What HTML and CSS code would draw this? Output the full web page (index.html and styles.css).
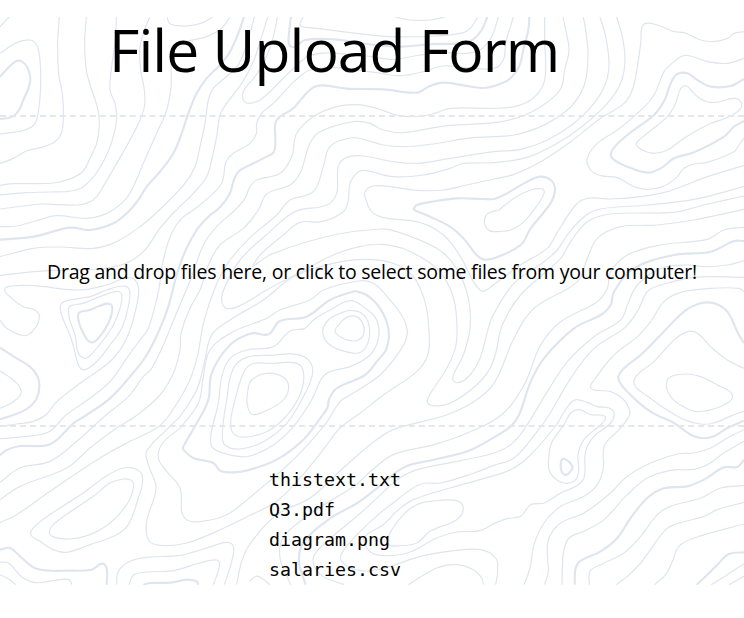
FILE: index.html
```html
<!DOCTYPE html>
<html lang="en">
<head>
<meta charset="utf-8">
<title>File Upload Form</title>
<link rel="stylesheet" href="styles.css">
</head>
<body>
<main class="page">
  <svg class="topography" viewBox="0 51 2232 1704" aria-hidden="true"></svg>
  <div class="content">
    <h1 class="title">File Upload Form</h1>
    <section class="dropzone"><p class="hint">Drag and drop files here, or click to select some files from your computer!</p></section>
    <ul class="files">
      <li>thistext.txt</li>
      <li>Q3.pdf</li>
      <li>diagram.png</li>
      <li>salaries.csv</li>
    </ul>
  </div>
</main>
<script src="topography.js"></script>
</body>
</html>
```
FILE: styles.css
```css
* { box-sizing: border-box; }
body { margin: 0; background: #fff; color: #000; font-family: "Open Sans", "Noto Sans", sans-serif; }
.page { display: grid; width: 744px; height: 568px; margin-top: 17px; }
.topography, .content { grid-area: 1 / 1; }
.topography { width: 744px; height: 568px; overflow: hidden; fill: none; stroke: #dfe5ee; stroke-width: 3.6; }
.topography .index { stroke-width: 6.4; }
.content { display: flex; flex-direction: column; z-index: 1; }
.title { margin: 0; height: 98px; padding-left: 109px; font-size: 58.8px; line-height: 65px; font-weight: 400; letter-spacing: -0.95px; white-space: nowrap; }
.dropzone { display: flex; align-items: center; height: 312px; padding-left: 47px; border: dashed #e5e7eb; border-width: 2px 0; }
.hint { margin: 2px 0 0; font-size: 19.5px; line-height: 28px; letter-spacing: -0.23px; white-space: nowrap; }
.files { margin: 38px 0 0; padding: 0 0 0 269px; list-style: none; font-family: "DejaVu Sans Mono", monospace; font-size: 18.27px; line-height: 30px; }
```
FILE: topography.js
```js
// Contour lines as x,y pairs. "!" marks a heavy index contour, "z" closes the curve.
// An "@ dx,dy" entry shifts the points that follow it.
const contours = `
0,80 27,51
0,160 50,128 90,120 110,135 120,180 122,250 117,320 105,370 75,390 30,398 0,402
! 0,230 25,203 48,184 65,184 82,202 91,235 85,265 70,300 58,328 38,350 0,357
178,51 173,130 176,220 188,290 190,360 184,400 165,425 125,442 80,453 40,475 0,491
259,51 254,130 259,210 275,270 293,325 298,375 290,430 270,475 250,513 215,535 160,549 100,551 40,551 0,556
349,51 346,120 335,200 330,270 345,310 350,355 340,410 320,465 285,525 250,560 215,573 150,576 80,578 0,585
449,51 430,100 419,150 422,210 433,270 434,315 420,360 390,420 350,490 315,550 290,590 265,608 230,615 180,614 120,612 70,618 0,627
690,51 665,85 620,110 570,122 530,140 513,170 513,200 513,260 500,330 470,400 430,490 395,570 370,605 320,640 260,655 170,647 110,662 50,678 0,680
502,51 508,70 530,77 570,77 610,67 638,51
! 732,51 715,100 690,155 660,195 620,235 590,280 565,340 545,400 520,460 480,515 440,560 415,600 385,635 340,670 270,690 210,683 100,710 0,719
763,51 750,100 725,175 705,207 640,265 625,300 615,370 600,440 585,500 555,550 478,630 420,680 350,725 280,745 180,741 100,745 0,770
803,51 785,110 760,185 725,250 680,310 660,345 650,410 635,480 620,530 580,580 523,636 480,685 430,755 370,793 290,807 200,810 100,815 0,827
1540,51 1517,130 1510,180 1482,205 1400,203 1330,198 1270,215 1200,227 1130,218 1010,203 930,210 880,247 820,310 785,340 770,370 769,400 750,430 700,460 678,485 672,520 665,550 640,580 580,630 545,655 515,700 490,780 475,875 445,985 420,1020 380,1075 330,1145 270,1195 198,1245 150,1294 100,1307 0,1316
832,51 820,110 795,180 765,230 735,265 727,290 738,308 755,309 780,300 820,265 870,215 920,172 960,160 1010,160 1100,168 1180,178 1260,165 1330,157 1400,160 1440,150 1475,110 1495,51
1433,51 1415,80 1390,98 1310,108 1170,110 1050,98 950,85 905,80 900,70 910,51
! 873,51 867,100 868,135 885,140 915,120 1000,118 1100,132 1200,140 1300,132 1390,130 1420,118 1445,90 1462,51
! 1588,51 1585,90 1572,140 1557,200 1527,238 1482,258 1450,264 1390,256 1330,248 1290,258 1250,278 1150,268 1040,266 970,256 940,262 910,290 880,325 840,350 826,370 826,420 822,455 800,470 750,495 715,515 700,545 690,580 660,622 625,650 590,690 555,755 530,825 505,920 480,985 440,1065 390,1130 330,1195 260,1245 220,1270 170,1320 135,1337 60,1338 20,1350 0,1366
1634,51 1634,120 1637,215 1627,260 1592,300 1542,320 1482,325 1350,325 1310,338 1270,348 1200,348 1130,325 1070,314 1010,320 940,350 890,400 875,470 840,520 770,540 750,560 735,595 705,630 650,680 610,735 575,830 525,950 490,1035 455,1105 430,1130 385,1190 318,1245 230,1324 150,1384 60,1404 0,1447
1689,51 1697,90 1707,150 1694,210 1685,260 1662,290 1622,320 1562,350 1482,368 1350,376 1290,385 1210,398 1150,390 1110,370 1060,365 960,395 930,430 900,520 870,555 800,582 775,630 730,685 660,735 625,795 600,870 570,925 543,1000 540,1050 520,1120 480,1185 412,1245 350,1284 270,1344 200,1404 60,1459 0,1499
1750,51 1757,90 1764,160 1759,230 1742,280 1702,330 1622,380 1542,405 1482,410 1400,415 1300,432 1210,440 1150,435 1090,418 1050,414 990,440 970,500 940,575 870,600 830,645 750,713 690,780 655,840 625,920 608,980 592,1070 565,1150 508,1245 470,1284 380,1329 300,1374 150,1474 50,1544 0,1568
1800,51 1817,110 1827,190 1817,250 1782,310 1722,370 1642,420 1562,448 1482,455 1350,475 1250,490 1180,485 1090,468 1040,472 1015,500 1010,580 980,615 885,635 810,695 720,780 675,860 665,900 680,925 720,917 800,870 880,828 1000,765 1080,740 1145,733 1220,750 1310,805 1350,865 1368,935 1368,1035 1340,1105 1295,1175 1282,1205 1300,1217 1350,1210 1430,1155 1470,1105 1487,1060 1507,975 1562,885 1682,775 1712,725 1762,665 1832,642 2022,637 2112,615 2232,588
1850,51 1867,110 1875,180 1862,250 1822,310 1752,375 1672,430 1582,472 1482,488 1390,490 1350,505 1270,525 1180,530 1100,512 1075,515 1050,550 1045,600 1030,635 965,665 900,667 850,705 780,765 757,800
757,800 820,760 1000,705 1145,687 1190,695 1310,745 1370,805 1405,895 1410,985 1390,1065 1358,1135 1375,1148 1410,1125 1440,1075 1465,985 1482,940 1542,850 1632,785 1672,750 1702,705 1752,650 1802,627 1942,615 2082,598 2232,560
2232,95 2202,100 2182,115 2142,125 2102,120 2052,98 2022,95 1972,75 1937,70 1925,85 1922,130 1912,200 1897,270 1872,310 1802,355 1712,425 1622,485 1542,523 1482,537 1400,555 1330,570 1250,571 1170,560 1120,558 1095,575 1098,600 1115,635 1150,653 1250,665 1310,690 1350,725 1390,785 1420,845 1440,870 1455,872 1500,840 1562,795 1642,745 1667,705 1727,615 1762,595 1832,597 1922,590 2002,575 2122,530 2232,497
! 1240,630 1250,615 1310,603 1370,595 1450,597 1482,597 1512,585 1582,545 1622,530 1652,540 1665,565 1657,600 1637,630 1592,685 1562,735 1482,775 1450,778 1430,765 1390,715 1350,680 1290,650 1242,630 1240,630
1497,630 1542,595 1592,570 1627,567 1632,580 1612,615 1572,665 1532,690 1482,695 1465,690 1453,665 1465,640 1497,630
1185,51 1230,60 1290,60 1335,51
@ 1482,0 750,175 700,190 640,185 590,168 565,168 540,185 510,215 490,265 470,300 430,340 370,390 310,430 280,475 290,510 320,527 370,533 420,560 460,568 510,558 550,530 570,505 600,492 640,487 720,455 735,435 750,415
! @ 1482,0 750,237 710,258 650,260 610,240 580,220 550,222 530,250 512,300 480,345 400,405 355,450 355,475 400,500 460,518 500,505 540,475 600,457 690,410 720,380 750,363
z @ 1482,0 578,258 590,270 620,297 660,308 720,295 740,305 740,325 710,348 640,375 570,415 520,450 480,460 445,450 427,432 445,412 520,350 545,310 560,265
z @ 120,795 62,120 80,107 150,95 200,75 250,63 268,75 266,120 245,190 210,240 175,285 145,310 125,313 112,290 95,225 65,150
z @ 120,795 86,130 95,121 130,115 180,95 230,79 245,88 240,130 220,180 190,225 150,272 135,280 115,265 105,210 88,160
z ! @ 120,795 118,143 150,135 180,122 210,117 217,135 205,175 175,220 152,232 130,205 115,165
0,960 20,985 75,1007 105,985 118,950 105,930 70,920 35,895 14,868 35,858 100,857 240,870 320,855 390,833 415,860 408,925 380,1015 335,1080 240,1150 170,1205 137,1245 100,1264 50,1272 0,1279
! 0,1043 50,1075 95,1105 117,1145 110,1195 80,1227 40,1245 0,1258
0,1113 40,1140 64,1175 40,1205 0,1225
@ 540,900 0,385 55,310 70,230 90,150 160,95 260,55 300,30 390,0 @ 750,615 220,255 325,228 370,235 420,285 460,340 472,385 455,430 390,510 300,570 270,590 @ 750,1224 225,50 130,155 0,268 -70,320 -150,341 -190,335 -205,310 -210,240 -250,190 -275,150 -262,105 -210,61
@ 540,900 0,350 50,270 75,180 95,105 150,60 250,0 @ 750,615 130,215 250,175 345,163 430,175 490,215 525,290 537,380 533,450 500,500 400,570 330,625 @ 750,1224 270,60 220,125 150,210 80,280 0,322 -100,370 -190,405 -270,412 -305,395 -310,340 -282,240 -305,170 -310,130 -250,65 -210,26
! @ 540,900 525,-27 450,0 380,50 300,63 265,103 215,100 150,135 95,220 85,300 50,370 10,440 @ 0,1224 550,125 580,150 640,165 660,188 700,193 750,185 @ 750,1224 80,155 160,95 215,25 232,0 @ 750,615 238,580 260,550 345,510 380,470 410,430 415,370 390,310 350,270 315,258
z @ 540,900 450,30 400,60 375,85 330,93 280,140 200,150 150,175 125,230 115,310 92,410 100,445 160,467 210,468 280,435 340,380 395,300 425,235 450,215 @ 750,615 300,485 360,450 385,400 380,345 340,305 300,287
z @ 540,900 160,205 200,172 270,166 350,163 390,185 397,225 370,290 320,370 250,425 180,447 135,435 127,400 140,300
z @ 540,900 190,220 215,192 270,190 350,190 370,215 365,270 330,335 270,390 200,411 160,400 152,365 165,300
z @ 540,900 203,275 215,240 260,220 310,232 326,265 305,305 240,340 215,342 202,315
z @ 750,615 300,316 335,325 357,360 355,410 335,440 300,443 240,420 218,380 235,345 270,325
z @ 750,615 255,378 270,355 290,337 320,335 340,360 340,390 325,405 300,407 270,395
@ 1482,615 750,13 600,45 490,60 380,65 310,100 280,160 250,230 120,310 60,400 0,535 -60,590 -142,630 @ 750,1224 540,35 430,65 360,110 280,180 180,270 80,320 0,408 -25,460 -40,530
@ 1482,615 750,67 690,75 640,103 500,120 400,150 350,200 340,250 310,290 200,350 140,420 90,540 22,630 @ 1482,1224 -80,75 -180,110 -302,140 -370,190 -420,235 -540,310 -630,385 -642,450 -610,530
! @ 1482,615 750,108 720,108 650,140 540,150 420,190 360,260 350,300 320,330 240,370 150,460 110,530 75,630 @ 1482,1224 50,55 0,88 -80,130 -180,155 -270,178 -350,240 -410,285 -490,330 -570,400 -585,460 -565,530
@ 1482,615 750,167 700,180 640,185 580,180 500,190 430,240 400,300 380,345 300,395 220,470 160,560 @ 1482,1224 90,65 50,110 0,135 -110,160 -230,185 -290,215 -340,260 -400,315 -500,400 -542,450 -520,500 -450,530
@ 1482,615 750,217 600,217 500,240 460,260 430,320 390,370 300,430 230,520 165,630 @ 1482,1224 130,70 60,150 0,172 -60,195 -160,225 -220,228 -290,275 -370,340 -450,425 -457,460 -400,488 -330,480 -220,445 -120,428 -40,425 5,450 11,490 5,530
@ 1482,615 750,260 735,250 650,250 560,262 510,290 470,350 430,395 360,450 300,525 290,548 310,556 350,560 390,585 408,620 @ 1482,1224 405,25 380,60 335,105 328,130 328,180 310,230 270,265 200,295 150,345 120,410 108,480 90,530
! @ 1482,615 750,415 730,380 700,320 660,295 620,295 570,320 500,390 440,450 390,490 373,520 400,560 470,620 @ 1482,1224 540,45 600,85 650,88 700,60 750,38
@ 1482,615 750,490 700,465 650,425 610,385 580,380 540,405 480,470 425,515 425,545 470,580 @ 1482,1224 510,0 570,35 620,48 660,45 720,20 750,10
z @ 1482,615 517,540 530,515 580,507 620,515 670,540 715,570 690,600 610,620 560,600 530,575
z @ 1482,1224 0,203 50,185 100,150 180,60 218,0 235,-20 250,-25 280,-17 310,-4 345,0 360,15 350,45 300,85 275,130 270,210 245,235 200,255 150,285 110,290 80,325 40,332 0,347 -42,368 -112,372 -172,390 -252,432 -312,443 -362,437 -387,410 -387,385 -332,350 -292,310 -242,275 -132,240
z @ 1482,1224 250,5 230,15 210,50 175,100 165,140 167,190 200,222 240,220 254,190 252,140 270,95 325,45 333,25 290,20 265,7
z ! @ 1482,1224 201,160 210,152 235,175 225,195 212,200 202,188
@ 1482,1224 750,65 700,90 650,120 600,135 550,138 470,165 400,205 350,255 270,315 200,345 165,390 160,440 163,490 152,530
@ 1482,1224 750,100 690,135 640,170 600,184 530,187 460,210 400,260 330,335 270,370 225,390 210,425 205,480 204,530
! @ 1482,1224 750,155 730,177 690,178 630,215 580,235 510,241 460,270 410,330 370,390 320,430 260,458 245,480 242,530
@ 1482,1224 750,233 680,240 620,270 530,295 490,320 440,385 390,435 320,470 288,490 286,530
@ 1482,1224 750,283 670,305 630,325 540,350 510,370 440,465 400,505 367,530
@ 1482,1224 750,348 600,390 555,415 535,460 515,500 482,530
! @ 1482,1224 750,433 705,438 670,470 640,500 608,530
@ 1482,1224 750,467 700,500 652,530
@ 1482,1224 750,505 705,530
z @ 750,1224 415,385 460,320 500,290 540,280 620,278 640,300 620,335 540,370 500,405 450,413 418,410
@ 750,1224 475,530 560,480 620,470 670,485 695,510 700,530
@ 750,1224 0,520 12,508 25,505 45,518 60,530
z @ 0,1224 92,378 110,350 180,300 250,255 310,210 370,180 415,187 428,215 415,270 385,350 350,380 270,410 200,433 160,425 120,400
z @ 0,1224 148,375 160,350 220,305 280,265 330,225 370,213 395,218 400,240 380,290 330,345 270,380 210,393 165,388
! @ 0,1224 0,425 30,420 60,445 110,482 220,488 275,485 305,467 320,480 320,530
@ 0,1224 0,462 25,465 70,510 110,524 160,518 205,514 216,530
@ 0,1224 0,500 25,512 47,530
@ 0,1224 350,530 355,490 390,460 440,448 540,442 620,420 680,403 700,415 695,460 673,530
@ 0,1224 387,530 400,502 440,492 520,488 600,465 650,456 658,475 640,530
! @ 0,1224 430,530 450,525 510,524 560,515 590,520 595,530
`;

// Tangents follow the neighbouring points, scaled to each segment's length.
function smooth(pts, closed) {
  const n = pts.length;
  const at = i => closed ? pts[(i + n) % n] : pts[Math.max(0, Math.min(n - 1, i))];
  const tangent = i => {
    const a = at(i - 1), b = at(i + 1);
    const l = Math.hypot(b[0] - a[0], b[1] - a[1]) || 1;
    return [(b[0] - a[0]) / l, (b[1] - a[1]) / l];
  };
  let d = `M${pts[0]}`;
  for (let i = 0; i < (closed ? n : n - 1); i++) {
    const p = at(i), q = at(i + 1), s = tangent(i), t = tangent(i + 1);
    const k = Math.hypot(q[0] - p[0], q[1] - p[1]) * 0.36;
    d += `C${p[0] + s[0] * k} ${p[1] + s[1] * k} ${q[0] - t[0] * k} ${q[1] - t[1] * k} ${q}`;
  }
  return d;
}

const svg = document.querySelector(".topography");
for (const line of contours.trim().split("\n")) {
  const tokens = line.trim().split(/\s+/);
  const pts = [];
  let closed = false, heavy = false, dx = 0, dy = 0;
  for (let i = 0; i < tokens.length; i++) {
    if (tokens[i] === "z") closed = true;
    else if (tokens[i] === "!") heavy = true;
    else if (tokens[i] === "@") [dx, dy] = tokens[++i].split(",").map(Number);
    else {
      const [x, y] = tokens[i].split(",").map(Number);
      pts.push([x + dx, y + dy]);
    }
  }
  const path = document.createElementNS("http://www.w3.org/2000/svg", "path");
  path.setAttribute("d", smooth(pts, closed));
  if (heavy) path.setAttribute("class", "index");
  svg.append(path);
}
```
